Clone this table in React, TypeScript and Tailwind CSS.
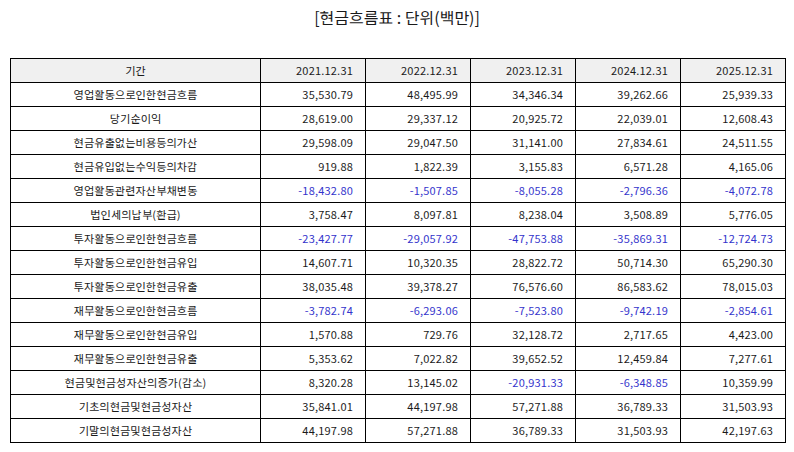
type Row = { label: string; values: number[] }

const years = ["2021.12.31", "2022.12.31", "2023.12.31", "2024.12.31", "2025.12.31"]

const rows: Row[] = [
  { label: "영업활동으로인한현금흐름", values: [35530.79, 48495.99, 34346.34, 39262.66, 25939.33] },
  { label: "당기순이익", values: [28619.0, 29337.12, 20925.72, 22039.01, 12608.43] },
  { label: "현금유출없는비용등의가산", values: [29598.09, 29047.5, 31141.0, 27834.61, 24511.55] },
  { label: "현금유입없는수익등의차감", values: [919.88, 1822.39, 3155.83, 6571.28, 4165.06] },
  { label: "영업활동관련자산부채변동", values: [-18432.8, -1507.85, -8055.28, -2796.36, -4072.78] },
  { label: "법인세의납부(환급)", values: [3758.47, 8097.81, 8238.04, 3508.89, 5776.05] },
  { label: "투자활동으로인한현금흐름", values: [-23427.77, -29057.92, -47753.88, -35869.31, -12724.73] },
  { label: "투자활동으로인한현금유입", values: [14607.71, 10320.35, 28822.72, 50714.3, 65290.3] },
  { label: "투자활동으로인한현금유출", values: [38035.48, 39378.27, 76576.6, 86583.62, 78015.03] },
  { label: "재무활동으로인한현금흐름", values: [-3782.74, -6293.06, -7523.8, -9742.19, -2854.61] },
  { label: "재무활동으로인한현금유입", values: [1570.88, 729.76, 32128.72, 2717.65, 4423.0] },
  { label: "재무활동으로인한현금유출", values: [5353.62, 7022.82, 39652.52, 12459.84, 7277.61] },
  { label: "현금및현금성자산의증가(감소)", values: [8320.28, 13145.02, -20931.33, -6348.85, 10359.99] },
  { label: "기초의현금및현금성자산", values: [35841.01, 44197.98, 57271.88, 36789.33, 31503.93] },
  { label: "기말의현금및현금성자산", values: [44197.98, 57271.88, 36789.33, 31503.93, 42197.63] },
]

function fmt(n: number) {
  return n.toLocaleString("en-US", { minimumFractionDigits: 2, maximumFractionDigits: 2 })
}

export default function App() {
  return (
    <div
      className="w-[794px] h-[452px] bg-white text-[#1a1a1a] overflow-hidden"
      style={{ fontFamily: '"Noto Sans KR", "Noto Sans CJK KR", "Noto Sans", sans-serif' }}
    >
      <h1 className="pt-[5px] text-center text-[16px] leading-[24px] font-normal">[현금흐름표 : 단위(백만)]</h1>
      <table className="mt-[29px] ml-[10px] w-[775px] border-collapse table-fixed text-[11px] tracking-[0.2px]">
        <colgroup>
          <col className="w-[250px]" />
          <col className="w-[105px]" />
          <col className="w-[105px]" />
          <col className="w-[105px]" />
          <col className="w-[105px]" />
          <col className="w-[105px]" />
        </colgroup>
        <thead>
          <tr className="h-[24px] bg-[#f0f0f0]">
            <th className="border-[1.5px] border-black font-normal text-center p-0">기간</th>
            {years.map((y) => (
              <th key={y} className="border-[1.5px] border-black font-normal text-right pr-[12px] p-0">
                {y}
              </th>
            ))}
          </tr>
        </thead>
        <tbody>
          {rows.map((r) => (
            <tr key={r.label} className="h-[24px]">
              <td className="border-[1.5px] border-black text-center p-0">{r.label}</td>
              {r.values.map((v, i) => (
                <td
                  key={i}
                  className={
                    v < 0
                      ? "border-[1.5px] border-black text-right pr-[12px] p-0 text-[#3333cc]"
                      : "border-[1.5px] border-black text-right pr-[12px] p-0"
                  }
                >
                  {fmt(v)}
                </td>
              ))}
            </tr>
          ))}
        </tbody>
      </table>
    </div>
  )
}
